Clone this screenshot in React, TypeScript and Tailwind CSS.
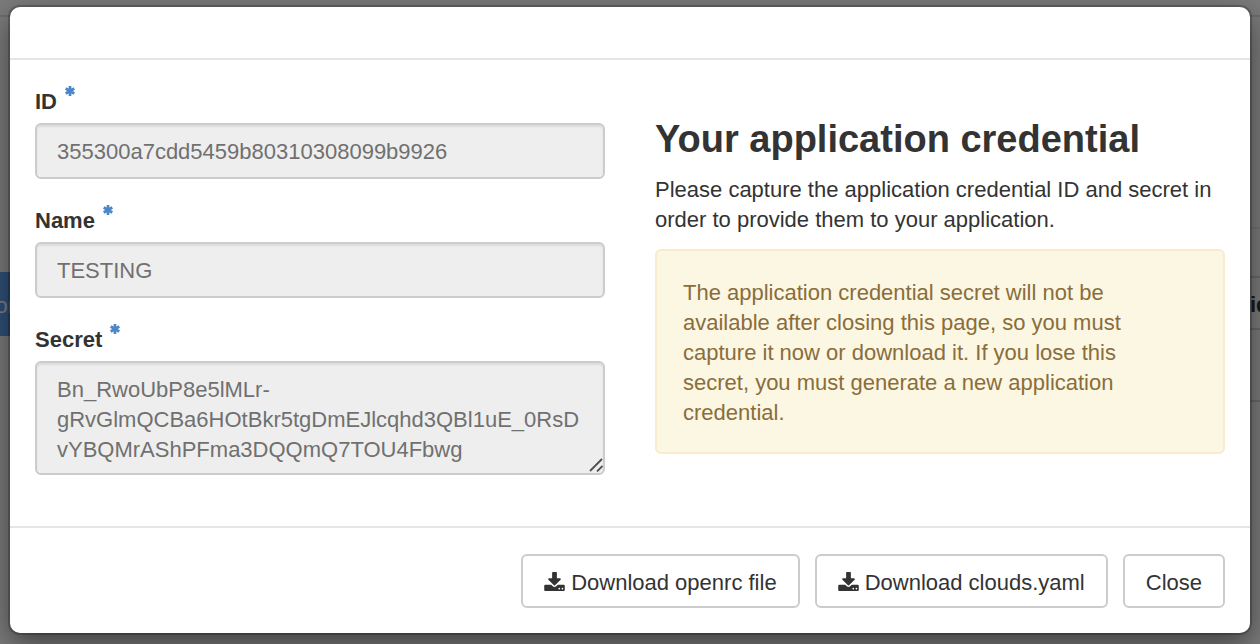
import React from "react";

function DownloadIcon() {
  return (
    <svg viewBox="0 0 1664 1536" className="mb-1 h-[19px] w-[21px] shrink-0" fill="currentColor" aria-hidden="true">
      <path d="M1280 1344q0-26-19-45t-45-19-45 19-19 45 19 45 45 19 45-19 19-45zm256 0q0-26-19-45t-45-19-45 19-19 45 19 45 45 19 45-19 19-45zm128-224v320q0 40-28 68t-68 28h-1472q-40 0-68-28t-28-68v-320q0-40 28-68t68-28h465l135 136q58 56 136 56t136-56l136-136h464q40 0 68 28t28 68zm-325-569q17 41-14 70l-448 448q-18 19-45 19t-45-19l-448-448q-31-29-14-70 17-39 59-39h256v-448q0-26 19-45t45-19h256q26 0 45 19t19 45v448h256q42 0 59 39z" />
    </svg>
  );
}

function RequiredMark() {
  return (
    <svg viewBox="0 0 10 10" className="size-[10px]" stroke="#4a86c8" strokeWidth="2.7" aria-hidden="true">
      <path d="M5 0V10M0.7 2.5L9.3 7.5M9.3 2.5L0.7 7.5" />
    </svg>
  );
}

function FieldLabel({ id, children }: { id: string; children: React.ReactNode }) {
  return (
    <label htmlFor={id} className="mb-[7px] flex h-[30px] items-start gap-2 font-bold leading-[32px]">
      {children}
      <RequiredMark />
    </label>
  );
}

const fieldClass =
  "block w-full rounded-[6px] border-2 border-[#cccccc] bg-[#eeeeee] px-5 leading-[30px] text-[#707070] shadow-[inset_0_2px_2px_rgba(0,0,0,0.075)] outline-none";

const inputClass = `${fieldClass} pt-[12px] pb-[10px]`;

const buttonClass =
  "flex items-center gap-[6px] rounded-[6px] border-2 border-[#cccccc] bg-white px-[21px] pt-[12px] pb-[8px] leading-[30px] text-[#333333]";

function PageBehind() {
  return (
    <div className="absolute inset-0 flex justify-between overflow-hidden bg-[#7b7b7b]" aria-hidden="true">
      <div className="w-[10px] overflow-hidden">
        <div className="h-[17px] border-b-2 border-[#6e6e6e]" />
        <div className="mt-[255px] flex h-16 items-center justify-end bg-[#2f5078] pt-1 text-[#808080]">
          <span className="-mr-[5px]">or</span>
        </div>
      </div>
      <div className="w-[10px] overflow-hidden">
        <div className="h-[17px] border-b-2 border-[#6e6e6e]" />
        <div className="h-[212px] border-b-2 border-[#737373]" />
        <div className="h-[49px] border-b-2 border-[#6a6a6a]" />
        <div className="flex h-[52px] items-center border-b-2 border-[#6a6a6a] pt-1 font-bold text-[#1a1a1a]">id</div>
        <div className="h-[72px] border-b-2 border-[#6a6a6a]" />
      </div>
    </div>
  );
}

export default function App() {
  return (
    <div className="relative flex min-h-screen flex-col overflow-hidden font-['Liberation_Sans',Arial,sans-serif] text-[22px] leading-[30px] text-[#333333]">
      <PageBehind />
      <div
        role="dialog"
        aria-modal="true"
        aria-labelledby="credential-title"
        className="relative mx-[10px] mt-[7px] mb-[11px] rounded-[10px] bg-white shadow-[0_0_0_2px_rgba(0,0,0,0.2),0_10px_30px_rgba(0,0,0,0.5)]"
      >
        <header className="h-[53px] border-b-2 border-[#e5e5e5]" />
        <div className="grid grid-cols-2 gap-[50px] px-[25px] pt-[26px] pb-[51px]">
          <form className="flex flex-col gap-[26px]">
            <div>
              <FieldLabel id="cred-id">ID</FieldLabel>
              <input id="cred-id" readOnly className={inputClass} defaultValue="355300a7cdd5459b80310308099b9926" />
            </div>
            <div>
              <FieldLabel id="cred-name">Name</FieldLabel>
              <input id="cred-name" readOnly className={inputClass} defaultValue="TESTING" />
            </div>
            <div>
              <FieldLabel id="cred-secret">Secret</FieldLabel>
              <div className="relative">
                <textarea
                  id="cred-secret"
                  readOnly
                  rows={3}
                  className={`${fieldClass} resize-none overflow-hidden pt-[12px] pb-[8px]`}
                  defaultValue="Bn_RwoUbP8e5lMLr-gRvGlmQCBa6HOtBkr5tgDmEJlcqhd3QBl1uE_0RsDvYBQMrAShPFma3DQQmQ7TOU4Fbwg"
                />
                <svg viewBox="0 0 14 14" className="absolute right-[2px] bottom-[3px] size-[14px]" stroke="#505050" strokeWidth="1.8" aria-hidden="true">
                  <path d="M1 13L13 1M8 13.5L13.5 8" />
                </svg>
              </div>
            </div>
          </form>
          <section className="pt-[31px]">
            <h3 id="credential-title" className="mb-[14px] text-[38px] font-bold leading-[44px]">
              Your application credential
            </h3>
            <p className="mb-[14px]">
              Please capture the application credential ID and secret in order to provide them to your application.
            </p>
            <p className="rounded-[6px] border-2 border-[#faebcc] bg-[#fbf7e3] pt-[27px] pr-[70px] pb-[24px] pl-[26px] text-[#8a6d3b]">
              The application credential secret will not be available after closing this page, so you must capture it
              now or download it. If you lose this secret, you must generate a new application credential.
            </p>
          </section>
        </div>
        <footer className="flex flex-wrap justify-end gap-[15px] border-t-2 border-[#e5e5e5] px-[25px] pt-[26px] pb-[25px]">
          <button type="button" className={buttonClass}>
            <DownloadIcon />
            Download openrc file
          </button>
          <button type="button" className={buttonClass}>
            <DownloadIcon />
            Download clouds.yaml
          </button>
          <button type="button" className={buttonClass}>
            Close
          </button>
        </footer>
      </div>
    </div>
  );
}
